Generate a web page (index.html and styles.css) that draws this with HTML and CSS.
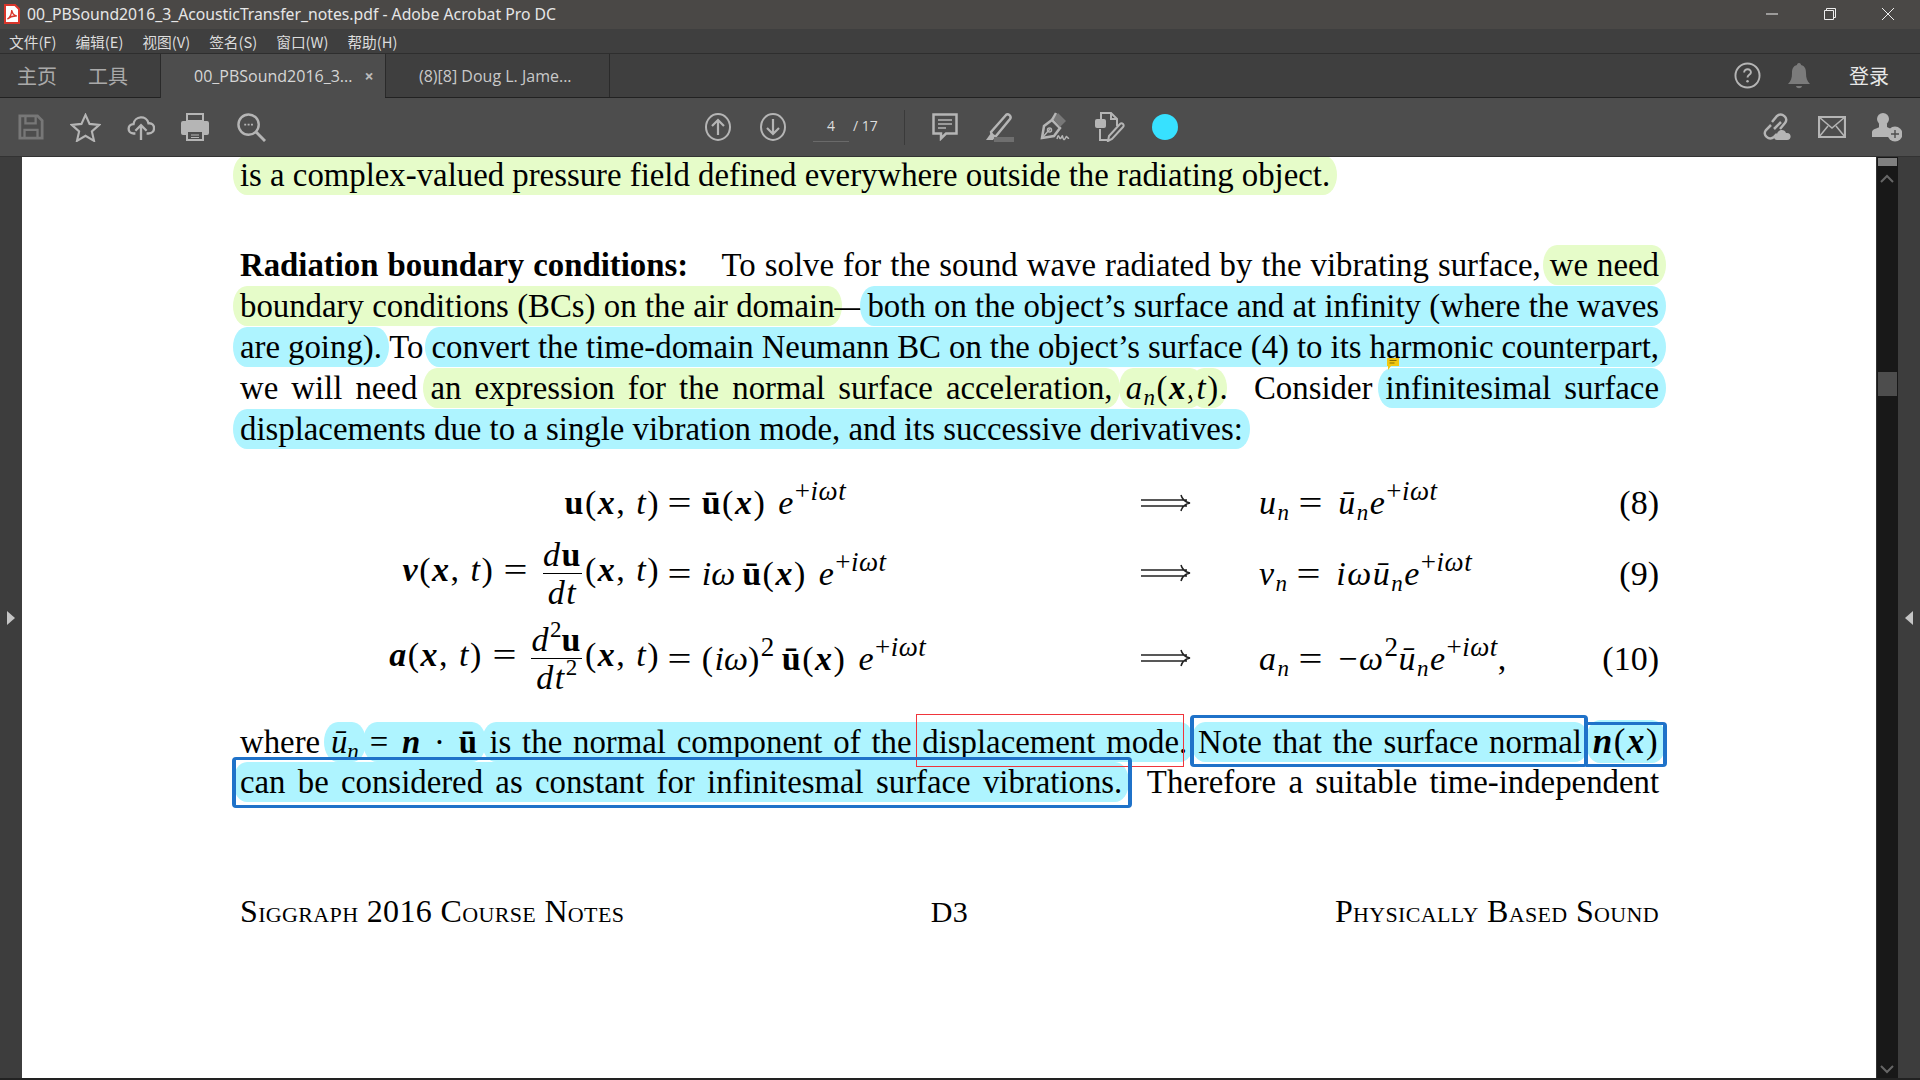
FILE: index.html
```html
<!DOCTYPE html>
<html lang="zh">
<head>
  <meta charset="UTF-8">
  <title>Adobe Acrobat Pro DC</title>
  <link rel="stylesheet" href="styles.css">
</head>
<body>
  <div class="titlebar">
    <svg class="pdf-icon" width="16" height="20" viewBox="0 0 16 20"><path d="M1 1h10l4 4v14H1z" fill="#fff" stroke="#d9362b" stroke-width="2"/><path d="M3.500 15c2-1 4-5 4.300-9 .5 4 2 5.500 5 6-3-.3-6.500.5-9.300 3z" fill="none" stroke="#d9362b" stroke-width="1.400"/></svg>
    <span class="title">00_PBSound2016_3_AcousticTransfer_notes.pdf - Adobe Acrobat Pro DC</span>
    <div class="winctl">
      <svg width="14" height="14" viewBox="0 0 14 14"><path d="M1 7h12" stroke="#eee" stroke-width="1"/></svg>
      <svg width="14" height="14" viewBox="0 0 14 14"><path d="M1.500 3.500h9v9h-9zM3.500 3.500v-2h9v9h-2" fill="none" stroke="#eee"/></svg>
      <svg width="14" height="14" viewBox="0 0 14 14"><path d="M1 1l12 12M13 1L1 13" stroke="#eee" stroke-width="1"/></svg>
    </div>
  </div>

  <div class="menubar">
    <span>文件(F)</span><span>编辑(E)</span><span>视图(V)</span><span>签名(S)</span><span>窗口(W)</span><span>帮助(H)</span>
  </div>

  <div class="tabbar">
    <div class="nav-tabs"><span>主页</span><span>工具</span></div>
    <div class="tab active"><span>00_PBSound2016_3...</span><span class="tab-close">×</span></div>
    <div class="tab"><span>(8)[8] Doug L. Jame...</span></div>
    <div class="tab-right">
      <svg width="27" height="27" viewBox="0 0 28 28"><circle cx="14" cy="14" r="12.500" fill="none" stroke="#b5b5b5" stroke-width="2"/><path d="M10.500 11c0-5 7.500-4.500 7 0-.3 2.300-3.500 2.500-3.500 5" fill="none" stroke="#b5b5b5" stroke-width="2"/><circle cx="14" cy="20" r="1.300" fill="#b5b5b5"/></svg>
      <svg class="bell" width="22" height="26" viewBox="0 0 22 26"><path d="M11 0c1.500 0 2 1 2 2 4 1 5 4 5 8 0 5 1 8 4 11H0c3-3 4-6 4-11 0-4 1-7 5-8 0-1 .5-2 2-2z" fill="#7b7b7b"/><path d="M8 23h6c-.5 3-5.500 3-6 0z" fill="#7b7b7b"/></svg>
      <span class="login">登录</span>
    </div>
  </div>

  <div class="toolbar">
    <div class="tool-group">
      <svg width="26" height="26" viewBox="0 0 28 28"><path d="M2 2h19l5 5v19H2z" fill="none" stroke="#777" stroke-width="3"/><path d="M8 2v8h11V2M7 26v-9h14v9" fill="none" stroke="#777" stroke-width="2.500"/></svg>
      <svg width="31" height="29" viewBox="0 0 32 30"><path d="M16 2l4.200 9.300 10 1-7.600 6.700 2.200 9.800L16 23.600 7.200 28.800 9.400 19l-7.600-6.700 10-1z" fill="none" stroke="#b5b5b5" stroke-width="2.200"/></svg>
      <svg width="28" height="28" viewBox="0 0 30 30"><path d="M9 22H7c-7 0-7-10 0-10 1-9 14-10 16-1 8-1 8 11 0 11h-2" fill="none" stroke="#b5b5b5" stroke-width="2.500"/><path d="M15 29V13m-6 6l6-6 6 6" fill="none" stroke="#b5b5b5" stroke-width="2.500"/></svg>
      <svg width="28" height="28" viewBox="0 0 28 28"><path d="M6 1h16v7H6z" fill="none" stroke="#b5b5b5" stroke-width="2"/><path d="M2 8h24q2 0 2 2v10q0 2-2 2h-3v-5H5v5H2q-2 0-2-2V10q0-2 2-2z" fill="#b5b5b5"/><path d="M6 18h16v9H6z" fill="none" stroke="#b5b5b5" stroke-width="2"/><path d="M10 22h8M10 24.500h8" stroke="#b5b5b5" stroke-width="1.200"/></svg>
      <svg class="tool-search" width="29" height="29" viewBox="0 0 30 30"><circle cx="12" cy="12" r="10.500" fill="none" stroke="#b5b5b5" stroke-width="2.500"/><path d="M20 20l9 9" stroke="#b5b5b5" stroke-width="3"/><path d="M7.500 12h2M11 12h2M14.500 12h2" stroke="#b5b5b5" stroke-width="2"/></svg>
    </div>
    <div class="tool-center">
      <svg width="26" height="28" viewBox="0 0 26 28"><ellipse cx="13" cy="14" rx="12" ry="13" fill="none" stroke="#b5b5b5" stroke-width="2"/><path d="M13 22V7M7 13l6-6 6 6" fill="none" stroke="#b5b5b5" stroke-width="2.200"/></svg>
      <svg class="tool-down" width="26" height="28" viewBox="0 0 26 28"><ellipse cx="13" cy="14" rx="12" ry="13" fill="none" stroke="#b5b5b5" stroke-width="2"/><path d="M13 6v15M7 15l6 6 6-6" fill="none" stroke="#b5b5b5" stroke-width="2.200"/></svg>
      <div class="pager"><span class="page-no">4</span><span class="page-total">/ 17</span></div>
      <div class="tool-sep"></div>
      <svg width="26" height="28" viewBox="0 0 26 28"><path d="M1.500 1.500h23v19H14l-5 5v-5H1.500z" fill="none" stroke="#b5b5b5" stroke-width="2.500"/><path d="M6 7h14M6 11h14M6 15h8" stroke="#b5b5b5" stroke-width="1.500"/></svg>
      <svg width="30" height="30" viewBox="0 0 30 30"><path d="M6 20L21 3c2-2 6 1 4 4L11 24c-2 1-5-2-5-4z" fill="none" stroke="#b5b5b5" stroke-width="2.500"/><path d="M6 21l-5 7h7l2-3z" fill="#b5b5b5"/><path d="M9 25h20v5H9z" fill="#6f6f6f"/></svg>
      <svg class="tool-nudge" width="30" height="30" viewBox="0 0 30 30"><path d="M2 26l2-12 8-6 8 8-6 8z" fill="none" stroke="#b5b5b5" stroke-width="2.500"/><path d="M2 26l8-9" stroke="#b5b5b5" stroke-width="1.500"/><circle cx="9.500" cy="18" r="2" fill="none" stroke="#b5b5b5" stroke-width="1.500"/><path d="M13 7l5-6 8 8-6 6z" fill="#777"/><path d="M12 8l4-7" stroke="#b5b5b5" stroke-width="2.500"/><path d="M17 27c2-8 2 2 4-1s1-3 2 0 2 1 3-1 1 2 3 1" fill="none" stroke="#b5b5b5" stroke-width="1.500"/></svg>
      <svg class="tool-nudge" width="30" height="30" viewBox="0 0 30 30"><path d="M6 7V1h10l6 6v7M16 1v6h6M5 17v11h8" fill="none" stroke="#b5b5b5" stroke-width="2"/><rect x="0" y="7" width="11" height="9" rx="2" fill="#b5b5b5"/><path d="M14 24L25 12c2-2 5 1 3 3L17 27l-4 2z" fill="none" stroke="#b5b5b5" stroke-width="2"/></svg>
      <div class="dot"></div>
    </div>
    <div class="tool-group right">
      <svg width="30" height="30" viewBox="0 0 30 30"><path d="M12 17l7-7M9 13l-5 5c-4 5 3 11 8 7l3-3M18 17l5-6c4-5-3-11-8-7l-5 6" fill="none" stroke="#b5b5b5" stroke-width="2.500"/><path d="M15 28c-4 0-4-6 0-6 1-5 8-5 9-1 6-1 6 7 1 7z" fill="#b5b5b5"/></svg>
      <svg width="28" height="22" viewBox="0 0 28 22"><path d="M1 1h26v20H1z" fill="none" stroke="#b5b5b5" stroke-width="2.200"/><path d="M1 1l13 11L27 1M1 21l9-11M27 21l-9-11" fill="none" stroke="#b5b5b5" stroke-width="1.500"/></svg>
      <svg width="30" height="30" viewBox="0 0 30 30"><circle cx="11" cy="7" r="6" fill="#b5b5b5"/><path d="M7 12h8v3l6 3c-3 2-4 4-4 7H0v-5c0-3 7-4 7-5z" fill="#b5b5b5"/><circle cx="23" cy="22" r="7.500" fill="#b5b5b5"/><path d="M19 22h8M23 18v8" stroke="#4d4d4d" stroke-width="1.400"/></svg>
    </div>
  </div>

  <div class="workspace">
    <div class="side"><div class="tri tri-right"></div></div>

    <div class="doc">
      <p class="line plain first"><span class="hl green">is a complex-valued pressure field defined everywhere outside the radiating object.</span></p>

      <div class="para">
        <p class="line"><b class="lead">Radiation boundary conditions:</b> To solve for the sound wave radiated by the vibrating surface, <span class="hl green">we need</span></p>
        <p class="line"><span class="hl green">boundary conditions (BCs) on the air domain</span>—<span class="hl blue">both on the object’s surface and at infinity (where the waves</span></p>
        <p class="line tight"><span class="hl blue">are going).</span> To <span class="hl blue">convert the time-domain Neumann BC on the object’s surface (4) to its harmonic counterpart,</span></p>
        <p class="line">we will need <span class="hl green">an expression for the normal surface acceleration,</span> <span class="hl green im"><i>a<sub class="sub">n</sub></i>(<b class="bi">x</b>,</span><span class="hl green im"><i>t</i>)</span>. &nbsp;Consider <span class="hl blue">infinitesimal surface</span></p>
        <p class="line plain"><span class="hl blue">displacements due to a single vibration mode, and its successive derivatives:</span></p>
      </div>

      <div class="eqs">
        <div class="cell lhs"><b>u</b>(<b class="bi">x</b>, <i>t</i>)</div>
        <div class="cell rhs"><span class="rel">=</span><b>ū</b>(<b class="bi">x</b>)<span class="e"><i>e</i><sup class="sup">+<i>iωt</i></sup></span></div>
        <div class="cell arrow"><svg width="50" height="20" viewBox="0 0 50 20"><path d="M0 7h46M0 13h46M40 2c1 4 4 7 9 8-5 1-8 4-9 8" fill="none" stroke="#222" stroke-width="1.500"/></svg></div>
        <div class="cell"><i>u<sub class="sub">n</sub></i><span class="rel">=</span><i>ū<sub class="sub">n</sub>e</i><sup class="sup">+<i>iωt</i></sup></div>
        <div class="cell num">(8)</div>

        <div class="cell lhs"><b class="bi">v</b>(<b class="bi">x</b>, <i>t</i>)<span class="rel">=</span><span class="frac"><span class="top"><i>d</i><b>u</b></span><span class="bot"><i>dt</i></span></span>(<b class="bi">x</b>, <i>t</i>)</div>
        <div class="cell rhs"><span class="rel">=</span><i class="iw">iω</i><span class="thin"></span><b>ū</b>(<b class="bi">x</b>)<span class="e"><i>e</i><sup class="sup">+<i>iωt</i></sup></span></div>
        <div class="cell arrow"><svg width="50" height="20" viewBox="0 0 50 20"><path d="M0 7h46M0 13h46M40 2c1 4 4 7 9 8-5 1-8 4-9 8" fill="none" stroke="#222" stroke-width="1.500"/></svg></div>
        <div class="cell"><i>v<sub class="sub">n</sub></i><span class="rel">=</span><i>iωū<sub class="sub">n</sub>e</i><sup class="sup">+<i>iωt</i></sup></div>
        <div class="cell num">(9)</div>

        <div class="cell lhs"><b class="bi">a</b>(<b class="bi">x</b>, <i>t</i>)<span class="rel">=</span><span class="frac"><span class="top"><i>d</i><sup class="sup">2</sup><b>u</b></span><span class="bot"><i>dt</i><sup class="sup">2</sup></span></span>(<b class="bi">x</b>, <i>t</i>)</div>
        <div class="cell rhs"><span class="rel">=</span>(<i class="iw">iω</i>)<sup class="sup">2</sup><span class="thin"></span><b>ū</b>(<b class="bi">x</b>)<span class="e"><i>e</i><sup class="sup">+<i>iωt</i></sup></span></div>
        <div class="cell arrow"><svg width="50" height="20" viewBox="0 0 50 20"><path d="M0 7h46M0 13h46M40 2c1 4 4 7 9 8-5 1-8 4-9 8" fill="none" stroke="#222" stroke-width="1.500"/></svg></div>
        <div class="cell"><i>a<sub class="sub">n</sub></i><span class="rel">=</span>−<i>ω</i><sup class="sup">2</sup><i>ū<sub class="sub">n</sub>e</i><sup class="sup">+<i>iωt</i></sup>,</div>
        <div class="cell num">(10)</div>
      </div>

      <div class="para-end">
        <p class="line">where <span class="hl blue"><i>ū<sub class="sub">n</sub></i></span> <span class="hl blue im">= <b class="bi">n</b> · <b>ū</b></span> <span class="hl blue">is the normal component of the displacement mode.</span> <span class="hl blue">Note that the surface normal</span> <span class="hl blue im wide"><b class="bi">n</b>(<b class="bi">x</b>)</span></p>
        <p class="line"><span class="hl blue">can be considered as constant for infinitesmal surface vibrations.</span> &nbsp;Therefore a suitable time-independent</p>
      </div>

      <div class="page-foot">
        <span>Siggraph 2016 Course Notes</span>
        <span class="foot-mid">D3</span>
        <span class="foot-right">Physically Based Sound</span>
      </div>

      <div class="mark red-box"></div>
      <div class="mark blue-a"></div>
      <div class="mark blue-b"></div>
      <div class="mark blue-c"></div>
      <svg class="note" width="12" height="12" viewBox="0 0 12 12"><path d="M0 0h12v8H4l-3 4V8H0z" fill="#f2c811"/><path d="M2.500 2.500h7M2.500 5h5" stroke="#8a6d00" stroke-width="1"/></svg>
    </div>

    <div class="scroll">
      <div class="thumb-top"></div>
      <svg class="scroll-up" width="14" height="9" viewBox="0 0 14 9"><path d="M1 8l6-6 6 6" fill="none" stroke="#666" stroke-width="2"/></svg>
      <div class="thumb"></div>
      <svg class="scroll-down" width="14" height="9" viewBox="0 0 14 9"><path d="M1 1l6 6 6-6" fill="none" stroke="#666" stroke-width="2"/></svg>
    </div>
    <div class="side"><div class="tri tri-left"></div></div>
  </div>
  <div class="bottom-strip"></div>
</body>
</html>
```

FILE: styles.css
```css
* {
  box-sizing: border-box;
}
html, body {
  margin: 0;
  height: 100%;
  overflow: hidden;
}
body {
  width: 1920px;
  height: 1080px;
  background: #3d3d3d;
  font-family: "Open Sans", "Noto Sans CJK SC", sans-serif;
  display: flex;
  flex-direction: column;
}

/* window chrome */
.titlebar {
  height: 29px;
  background: #4a4846;
  display: flex;
  align-items: center;
  padding: 0 0 2px 4px;
  color: #e6e6e6;
  font-family: "Noto Sans", sans-serif;
  font-size: 15.750px;
}
.pdf-icon {
  margin-right: 7px;
}
.winctl {
  margin-left: auto;
  display: flex;
  gap: 44px;
  padding-right: 25px;
}
.menubar {
  height: 25px;
  background: #3f3f3f;
  display: flex;
  align-items: center;
  padding-left: 9px;
  gap: 19px;
  color: #dcdcdc;
  font-family: "Noto Sans CJK SC", sans-serif;
  font-size: 14.700px;
  border-bottom: 1px solid #2e2e2e;
}
.tabbar {
  height: 44px;
  background: #3f3f3f;
  display: flex;
  border-bottom: 1px solid #222;
  color: #c9c9c9;
}
.nav-tabs {
  width: 160px;
  padding-left: 17px;
  display: flex;
  gap: 31px;
  align-items: center;
  font-family: "Noto Sans CJK SC", sans-serif;
  font-size: 20px;
  color: #aaa;
}
.tab {
  width: 225px;
  padding-left: 33px;
  display: flex;
  align-items: center;
  border-left: 1px solid #2a2a2a;
  font-size: 16px;
}
.tab + .tab {
  border-right: 1px solid #2a2a2a;
}
.tab.active {
  background: #4d4d4d;
  height: 44px;
  color: #d6d6d6;
}
.tab-close {
  margin-left: 12px;
  color: #bbb;
  font-size: 16px;
  font-weight: 700;
}
.tab-right {
  margin-left: auto;
  display: flex;
  align-items: center;
  padding-right: 31px;
}
.bell {
  margin-left: 27px;
}
.login {
  margin-left: 39px;
  font-family: "Noto Sans CJK SC", sans-serif;
  font-size: 20px;
  color: #e8e8e8;
}
.toolbar {
  height: 59px;
  background: #4d4d4d;
  display: flex;
  align-items: center;
  padding: 0 18px;
  border-bottom: 1px solid #333;
}
.tool-group {
  display: flex;
  align-items: center;
  gap: 26px;
}
.tool-search {
  margin-left: 2px;
}
.tool-group.right {
  margin-left: auto;
}
.tool-center {
  display: flex;
  align-items: center;
  margin-left: 439px;
  gap: 27px;
}
.tool-down {
  margin-left: 2px;
}
.tool-nudge {
  margin-left: -2px;
}
.pager {
  display: flex;
  width: 67px;
  color: #ddd;
  font-size: 14px;
}
.page-no {
  width: 36px;
  text-align: center;
  border-bottom: 1px solid #6a6a6a;
  padding: 4px 0 6px;
  margin-right: 4px;
}
.page-total {
  padding-top: 4px;
}
.tool-sep {
  width: 1px;
  height: 35px;
  background: #3a3a3a;
  margin-left: -3px;
}
.dot {
  width: 26px;
  height: 26px;
  border-radius: 50%;
  background: #37e1ff;
}

/* workspace */
.workspace {
  flex: 1;
  display: flex;
  min-height: 0;
}
.side {
  width: 22px;
  background: #3d3d3d;
  position: relative;
}
.tri {
  position: absolute;
  top: 454px;
  width: 0;
  height: 0;
  border-top: 7px solid transparent;
  border-bottom: 7px solid transparent;
}
.tri-right {
  left: 7px;
  border-left: 8px solid #c4c4c4;
}
.tri-left {
  left: 7px;
  border-right: 8px solid #c4c4c4;
}
.doc {
  width: 1854px;
  background: #fff;
  padding: 0 217px 0 218px;
  position: relative;
  overflow: hidden;
  color: #000;
  font-family: "Liberation Serif", serif;
  font-size: 32.800px;
}
.line {
  margin: 0;
  height: 41px;
  line-height: 41px;
  text-align: justify;
  text-align-last: justify;
}
.line.plain {
  text-align-last: left;
}
.line.first {
  margin-top: -2px;
}
.line.tight {
  word-spacing: -2.500px;
}
.para {
  margin-top: 49px;
}
.lead {
  margin-right: 25px;
}
.hl {
  padding: 1.800px 7px;
  margin: 0 -7px;
  border-radius: 14px / 20px;
}
.green {
  background: #e6fcc9;
}
.blue {
  background: #aef4ff;
}
.im {
  letter-spacing: 1.500px;
}
.im.wide {
  font-size: 35px;
}
.bi {
  font-style: italic;
  font-weight: 700;
}
.sub {
  font-size: 23px;
  line-height: 0;
  vertical-align: -6px;
}
.sup {
  font-size: 27px;
  line-height: 0;
  vertical-align: 14px;
  letter-spacing: .5px;
}

/* equations */
.eqs {
  margin-top: 30px;
  display: grid;
  grid-template-columns: 420px 481px 118px 1fr 60px;
  grid-template-rows: 45px 96px 74px;
  white-space: nowrap;
  font-size: 34px;
  letter-spacing: 1.500px;
}
.cell {
  align-self: center;
  line-height: 41px;
}
.lhs {
  text-align: right;
}
.arrow {
  line-height: 0;
}
.num {
  text-align: right;
  letter-spacing: 0;
}
.rel {
  display: inline-block;
  margin: 0 17px 0 10px;
  transform: scaleX(1.250);
}
.lhs .rel {
  margin: 0 16px 0 12px;
}
.rhs .rel {
  margin: 0 11px 0 10px;
}
.iw {
  letter-spacing: 0;
}
.thin {
  display: inline-block;
  width: 7px;
}
.e {
  margin-left: 12px;
}
.frac {
  display: inline-flex;
  flex-direction: column;
  align-items: center;
  vertical-align: middle;
  line-height: 37px;
  margin-right: 3px;
}
.frac .top {
  border-bottom: 1.500px solid #000;
  width: 100%;
  text-align: center;
}
.frac .sup {
  font-size: 23px;
  letter-spacing: 0;
}
.para-end {
  margin-top: 26px;
}
.page-foot {
  margin-top: 88px;
  display: grid;
  grid-template-columns: 1fr auto 1fr;
  line-height: 41px;
  font-size: 32px;
  letter-spacing: .35px;
  font-variant: small-caps;
}
.foot-mid {
  font-size: 30px;
}
.foot-right {
  text-align: right;
}

/* annotations laid over the page */
.mark {
  position: absolute;
  pointer-events: none;
}
.red-box {
  left: 894px;
  top: 557px;
  width: 268px;
  height: 53px;
  border: 1px solid #f0353b;
}
.blue-a {
  left: 1168px;
  top: 558px;
  width: 398px;
  height: 52px;
  border: 3px solid #1f72c9;
  border-width: 3px 4px;
  border-radius: 4px;
}
.blue-b {
  left: 1564px;
  top: 565px;
  width: 81px;
  height: 45px;
  border: 3px solid #1f72c9;
  border-width: 3px 4px 3px 0;
  border-radius: 0 4px 4px 0;
}
.blue-c {
  left: 210px;
  top: 600px;
  width: 900px;
  height: 51px;
  border: 3px solid #1f72c9;
  border-width: 3px 4px;
  border-radius: 4px;
}
.note {
  position: absolute;
  left: 1365px;
  top: 201px;
}

/* scrollbar */
.scroll {
  width: 22px;
  background: #181818;
  border-left: 1px solid #333;
  position: relative;
}
.thumb-top {
  position: absolute;
  left: 1px;
  top: 1px;
  width: 19px;
  height: 8px;
  background: #808080;
}
.scroll-up {
  position: absolute;
  left: 3px;
  top: 17px;
}
.thumb {
  position: absolute;
  left: 1px;
  top: 215px;
  width: 19px;
  height: 24px;
  background: #4d4d4d;
}
.scroll-down {
  position: absolute;
  left: 3px;
  bottom: 4px;
}
.bottom-strip {
  height: 2px;
  background: #222;
}
```
